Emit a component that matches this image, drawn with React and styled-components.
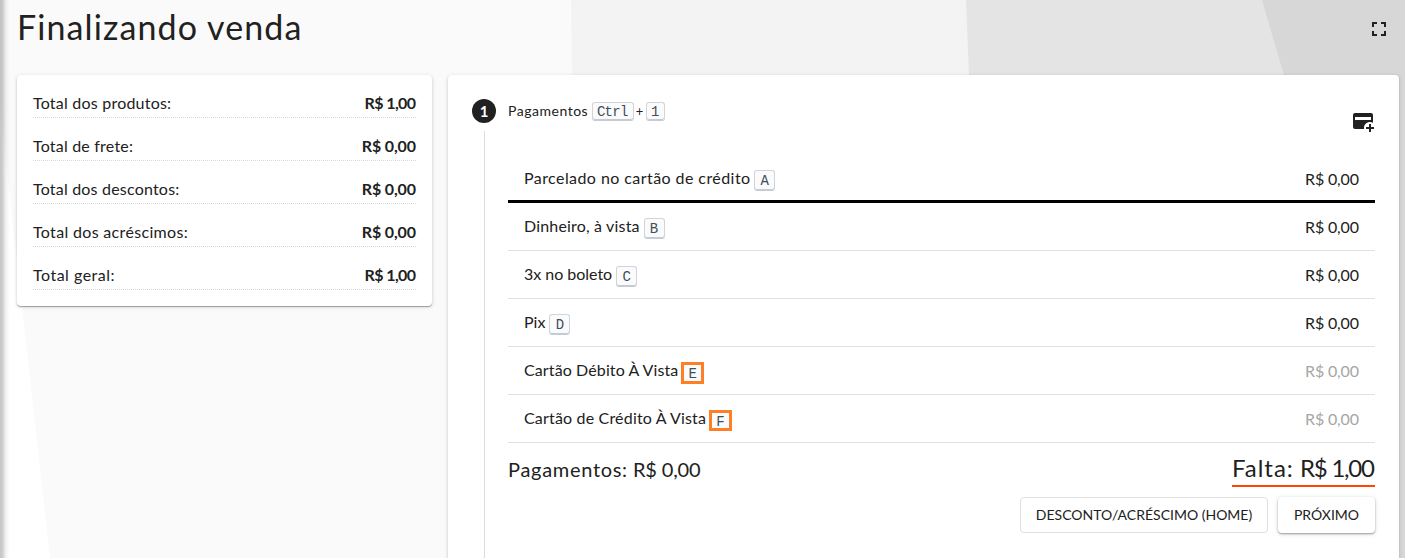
import React from "react";
import styled, { createGlobalStyle } from "styled-components";

const Global = createGlobalStyle`
  *, *::before, *::after { box-sizing: border-box; }
  html, body { margin: 0; height: 100%; overflow: hidden; background: #fff; }
  body { font-family: Lato, "Open Sans", sans-serif; font-size: 16px; color: #212121; }
`;

const Page = styled.div`
  position: relative;
  isolation: isolate;
  height: 558px;
  width: 1405px;
  overflow: hidden;
  display: flex;
  flex-direction: column;
`;

const Backdrop = styled.svg`
  position: absolute;
  inset: 0;
  z-index: -1;
`;

const EdgeShadow = styled.div`
  position: absolute;
  left: 0;
  top: 0;
  width: 10px;
  height: 100%;
  background: linear-gradient(90deg, rgba(0,0,0,.23) 0, rgba(0,0,0,.18) 3px, rgba(0,0,0,.08) 5px, rgba(0,0,0,.03) 7px, transparent);
`;

const Header = styled.header`
  height: 75px;
  flex: none;
  display: flex;
  justify-content: space-between;
  padding: 7px 14px 0 17px;
`;

const Title = styled.h1`
  margin: 0;
  font-size: 34px;
  line-height: 40px;
  font-weight: 400;
`;

const Text = styled.span`
  white-space: pre;
  letter-spacing: ${(p) => p.$ls || 0}px;
  margin-right: ${(p) => -(p.$ls || 0)}px;
`;

const IconButton = styled.button`
  width: 24px;
  height: 24px;
  padding: 0;
  border: 0;
  background: none;
  color: #212121;
  margin-top: ${(p) => p.$top || 0}px;
  svg { display: block; }
`;

const Columns = styled.main`
  display: flex;
  align-items: flex-start;
  gap: 16px;
  padding: 0 6px 0 17px;
`;

const Card = styled.section`
  background: #fff;
  border-radius: 4px;
  box-shadow: 0 1px 1px rgba(0,0,0,.32), 0 1px 4px rgba(0,0,0,.14);
`;

const Summary = styled(Card)`
  width: 415px;
  padding: 16px;
  display: flex;
  flex-direction: column;
  gap: 16px;
`;

const SummaryRow = styled.div`
  height: 27px;
  display: flex;
  justify-content: space-between;
  line-height: 23px;
  border-bottom: 1px dotted #d8d8d8;
`;

const Amount = styled.strong`
  font-weight: 700;
`;

const Checkout = styled(Card)`
  width: 951px;
  height: 520px;
  padding: 24px 24px 0;
  display: flex;
  gap: 12px;
`;

const StepRail = styled.div`
  width: 24px;
  display: flex;
  flex-direction: column;
  align-items: center;
  gap: 8px;
`;

const StepNumber = styled.div`
  width: 24px;
  height: 24px;
  flex: none;
  border-radius: 50%;
  background: #212121;
  color: #fff;
  font-size: 15px;
  font-weight: 700;
  line-height: 24px;
  text-align: center;
`;

const StepLine = styled.div`
  width: 1px;
  flex: 1;
  background: #dcdcdc;
`;

const StepBody = styled.div`
  flex: 1;
  display: flex;
  flex-direction: column;
`;

const StepHeader = styled.div`
  height: 56px;
  display: flex;
  justify-content: space-between;
`;

const StepLabel = styled.div`
  height: 24px;
  display: flex;
  align-items: flex-start;
  padding-top: 3px;
  font-size: 14px;
  line-height: 18px;
`;

const Plus = styled.span`
  width: 8px;
  padding-left: 2px;
  font-size: 13px;
`;

const Key = styled.kbd`
  width: ${(p) => p.$w || 21}px;
  height: ${(p) => (p.$small ? 19 : 21)}px;
  margin-left: 4px;
  padding: 0;
  text-align: center;
  font: 14px/${(p) => (p.$small ? 18 : 21)}px "Liberation Mono", monospace;
  letter-spacing: -0.7px;
  text-indent: -0.7px;
  color: #444d56;
  background: #fafbfc;
  border: 1px solid #d1d5da;
  border-bottom-color: #c6cbd1;
  border-radius: 3px;
  box-shadow: inset 0 -1px 0 #c6cbd1;
`;

const MarkedKey = styled(Key)`
  height: ${(p) => p.$h}px;
  width: 23px;
  margin-left: 3px;
  line-height: 18px;
  border: 3px solid #ff7f27;
  border-radius: 0;
  box-shadow: none;
`;

const PaymentRow = styled.div`
  height: 48px;
  padding: 0 16px;
  display: flex;
  justify-content: space-between;
  border-bottom: ${(p) => (p.$active ? "3px solid #000" : "1px solid #e0e0e0")};
`;

const Method = styled.div`
  display: flex;
  align-items: flex-start;
  padding-top: 14px;
  line-height: 18px;
`;

const KeySlot = styled.span`
  display: flex;
  margin-top: 1px;
`;

const Value = styled.div`
  padding-top: 14px;
  line-height: 20px;
  color: ${(p) => (p.$muted ? "#a6a6a6" : "#212121")};
`;

const Totals = styled.div`
  height: 54px;
  padding-top: 10px;
  display: flex;
  justify-content: space-between;
  align-items: flex-start;
`;

const Paid = styled.div`
  font-size: 20px;
  line-height: 32px;
`;

const Missing = styled.div`
  font-size: 24px;
  height: 34px;
  line-height: 30px;
  border-bottom: 2px solid #ff4500;
`;

const Actions = styled.div`
  display: flex;
  justify-content: flex-end;
  gap: 10px;
`;

const Button = styled.button`
  width: ${(p) => p.$w}px;
  height: 36px;
  padding: 0 0 2px;
  font: 400 14px Lato, sans-serif;
  color: #212121;
  background: #fff;
  border: 1px solid ${(p) => (p.$raised ? "transparent" : "#e0e0e0")};
  border-radius: 4px;
  box-shadow: ${(p) => (p.$raised ? "0 1px 2px rgba(0,0,0,.35), 0 1px 5px rgba(0,0,0,.12)" : "none")};
`;

const totals = [
  ["Total dos produtos:", "R$ 1,00", 0.22, -0.6],
  ["Total de frete:", "R$ 0,00", 0.2, -0.15],
  ["Total dos descontos:", "R$ 0,00", 0.2, -0.15],
  ["Total dos acréscimos:", "R$ 0,00", 0.33, -0.15],
  ["Total geral:", "R$ 1,00", 0.5, -0.6],
];

const methods = [
  { name: "Parcelado no cartão de crédito", k: "A", ls: 0.43, active: true },
  { name: "Dinheiro, à vista", k: "B", ls: 0.18 },
  { name: "3x no boleto", k: "C", ls: -0.02 },
  { name: "Pix", k: "D", ls: 0 },
  { name: "Cartão Débito À Vista", k: "E", ls: 0.11, marked: true, h: 22 },
  { name: "Cartão de Crédito À Vista", k: "F", ls: 0.18, marked: true, h: 21 },
];

export default function App() {
  return (
    <Page>
      <Global />
      <Backdrop width="1405" height="558" viewBox="0 0 1405 558">
        <rect width="1405" height="558" fill="#fff" />
        <path d="M-12 0H1405V558H50Z" fill="#fafafa" />
        <path d="M571 0H1405V558H578Z" fill="#f3f3f3" />
        <path d="M966 0H1405V558H988Z" fill="#e4e4e4" />
        <path d="M1262 0H1405V490Z" fill="#d7d7d7" />
        <path d="M1390 0H1405V558H1390Z" fill="#d7d7d7" />
      </Backdrop>
      <EdgeShadow />
      <Header>
        <Title><Text $ls={1.1}>Finalizando venda</Text></Title>
        <IconButton $top={10} aria-label="Tela cheia">
          <svg width="24" height="24" viewBox="0 0 24 24" fill="currentColor">
            <path d="M5 5h5v2H7v3H5V5m9 0h5v5h-2V7h-3V5m3 9h2v5h-5v-2h3v-3m-7 3v2H5v-5h2v3h3z" />
          </svg>
        </IconButton>
      </Header>
      <Columns>
        <Summary>
          {totals.map(([label, value, a, b]) => (
            <SummaryRow key={label}>
              <Text $ls={a}>{label}</Text>
              <Amount><Text $ls={b}>{value}</Text></Amount>
            </SummaryRow>
          ))}
        </Summary>
        <Checkout>
          <StepRail>
            <StepNumber>1</StepNumber>
            <StepLine />
          </StepRail>
          <StepBody>
            <StepHeader>
              <StepLabel>
                <Text $ls={0.52}>Pagamentos</Text>
                <Key $small $w={42}>Ctrl</Key>
                <Plus>+</Plus>
                <Key $small $w={19}>1</Key>
              </StepLabel>
              <IconButton $top={11} aria-label="Adicionar pagamento">
                <svg width="24" height="24" viewBox="0 0 24 24" fill="currentColor">
                  <path fillRule="evenodd" d="M4 3H20a2 2 0 0 1 2 2V12.8A6 6 0 0 0 13.1 19H4a2 2 0 0 1-2-2V5a2 2 0 0 1 2-2ZM4 7V10H20V7Z" />
                  <path d="M18 14h2v3h3v2h-3v3h-2v-3h-3v-2h3z" />
                </svg>
              </IconButton>
            </StepHeader>
            {methods.map((m) => (
              <PaymentRow key={m.k} $active={m.active}>
                <Method>
                  <Text $ls={m.ls}>{m.name}</Text>
                  <KeySlot>
                    {m.marked ? <MarkedKey $h={m.h}>{m.k}</MarkedKey> : <Key>{m.k}</Key>}
                  </KeySlot>
                </Method>
                <Value $muted={m.marked}><Text $ls={-0.15}>R$ 0,00</Text></Value>
              </PaymentRow>
            ))}
            <Totals>
              <Paid>
                <Text $ls={0.7}>Pagamentos: </Text>
                <Text $ls={-0.15}>R$ 0,00</Text>
              </Paid>
              <Missing>
                <Text $ls={0.95}>Falta: </Text>
                <Text $ls={-1.2}>R$ 1,00</Text>
              </Missing>
            </Totals>
            <Actions>
              <Button $w={248}><Text $ls={0}>DESCONTO/ACRÉSCIMO (HOME)</Text></Button>
              <Button $w={97} $raised><Text $ls={0}>PRÓXIMO</Text></Button>
            </Actions>
          </StepBody>
        </Checkout>
      </Columns>
    </Page>
  );
}
